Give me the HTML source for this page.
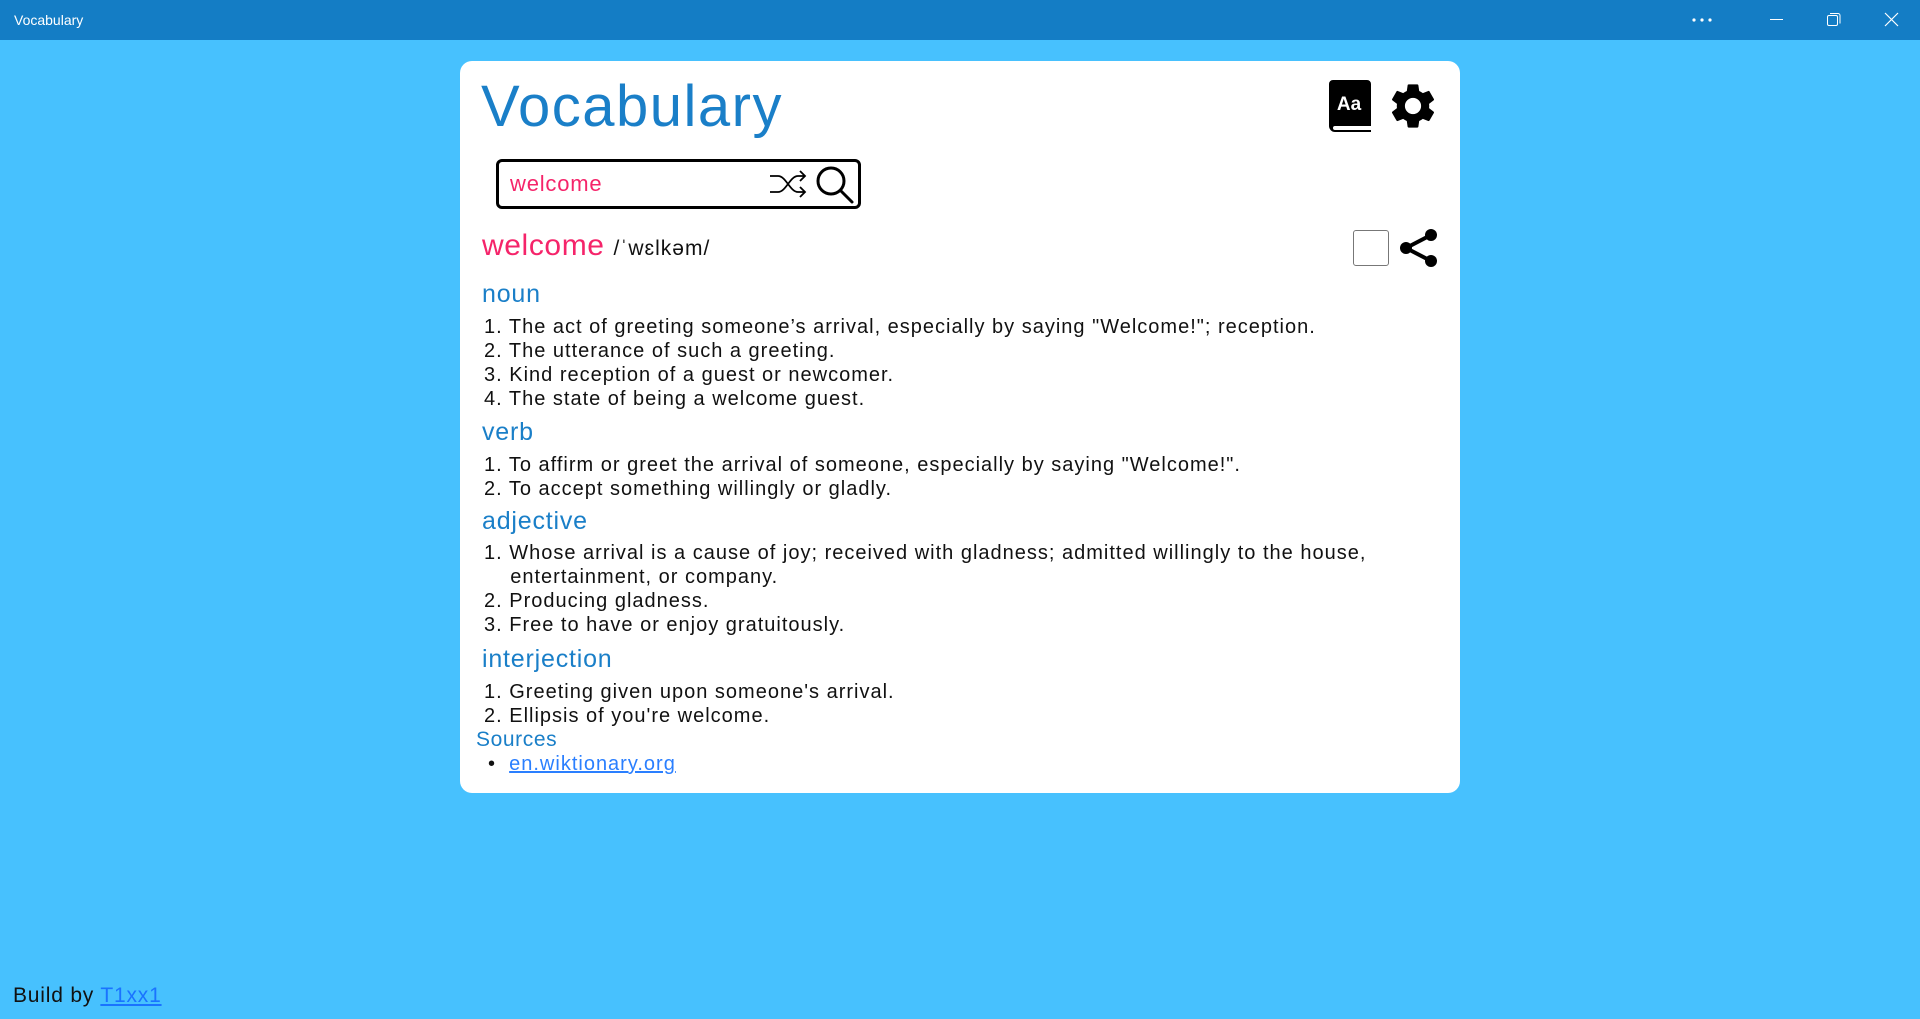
<!DOCTYPE html>
<html><head><meta charset="utf-8"><style>
*{margin:0;padding:0;box-sizing:border-box}
body{width:1920px;height:1019px;background:#47c1fe;font-family:"Liberation Sans",sans-serif;position:relative;overflow:hidden;color:#111}
.tb{position:absolute;left:0;top:0;width:1920px;height:40px;background:#147dc5;color:#fff;font-size:14px}
.a{position:absolute;white-space:nowrap}
.card{position:absolute;left:460px;top:61px;width:1000px;height:732px;background:#fff;border-radius:12px}
.h{color:#1a7fc8;font-size:25px;letter-spacing:0.8px}
.li{font-size:20px;line-height:24px;letter-spacing:1px}
</style></head><body>
<div class="tb">
<div class="a" style="left:14px;top:12px">Vocabulary</div>
<svg class="a" style="left:1690px;top:15px" width="24" height="10"><circle cx="4" cy="5" r="1.6" fill="#fff"/><circle cx="12" cy="5" r="1.6" fill="#fff"/><circle cx="20" cy="5" r="1.6" fill="#fff"/></svg>
<div class="a" style="left:1770px;top:19px;width:13px;height:1px;background:#fff"></div>
<svg class="a" style="left:1826px;top:12px" width="16" height="16" fill="none" stroke="#fff"><rect x="1.5" y="3.5" width="10" height="10" rx="1.5"/><path d="M4 1.5h8a2 2 0 0 1 2 2v8"/></svg>
<svg class="a" style="left:1884px;top:12px" width="15" height="15" stroke="#fff" stroke-width="1.2"><path d="M1 1L14 14M14 1L1 14"/></svg>
</div>
<div class="card"></div>
<div class="a" style="left:481px;top:73px;font-size:58px;color:#1a7fc8;letter-spacing:1.5px">Vocabulary</div>
<svg class="a" style="left:1329px;top:80px" width="42" height="52"><path d="M4 0h34a4 4 0 0 1 4 4v42H6a2 2 0 0 0 0 4h36v2H6a6 6 0 0 1-6-6V4a4 4 0 0 1 4-4z" fill="#000"/><text x="20" y="30" fill="#fff" font-size="19" font-weight="bold" text-anchor="middle" font-family="Liberation Sans">Aa</text></svg>
<svg class="a" style="left:1386px;top:79px" width="54" height="54" viewBox="0 0 24 24"><path fill="#000" d="M19.14 12.94c.04-.3.06-.61.06-.94 0-.32-.02-.64-.07-.94l2.03-1.58a.49.49 0 0 0 .12-.61l-1.920-3.32a.488.488 0 0 0-.59-.22l-2.39.96c-.5-.38-1.03-.7-1.62-.94l-.36-2.54a.484.484 0 0 0-.48-.41h-3.84c-.24 0-.43.17-.47.41l-.36 2.54c-.59.24-1.13.57-1.62.94l-2.39-.96c-.22-.08-.47 0-.59.22L2.74 8.87c-.12.21-.08.47.12.61l2.03 1.58c-.05.3-.09.63-.09.94s.02.64.07.94l-2.03 1.58a.49.49 0 0 0-.12.61l1.92 3.32c.12.22.37.29.59.22l2.39-.96c.5.38 1.03.7 1.62.94l.36 2.54c.05.24.24.41.48.41h3.84c.24 0 .44-.17.47-.41l.36-2.54c.59-.24 1.130-.56 1.62-.94l2.39.96c.22.08.47 0 .59-.22l1.92-3.32c.12-.22.07-.47-.12-.61l-2.01-1.58zM12 15.6A3.6 3.6 0 1 1 12 8.4a3.6 3.6 0 0 1 0 7.2z"/></svg>
<div class="a" style="left:496px;top:159px;width:365px;height:50px;border:3px solid #000;border-radius:6px"></div>
<div class="a" style="left:510px;top:171px;font-size:22px;color:#f5246a;letter-spacing:0.8px">welcome</div>
<svg class="a" style="left:768px;top:167px" width="40" height="34" fill="none" stroke="#000" stroke-width="1.8"><path d="M2 9h8c8 0 12 16 20 16h7M2 25h8c8 0 12-16 20-16h7M32 4l5 5-5 5M32 20l5 5-5 5"/></svg>
<svg class="a" style="left:815px;top:165px" width="40" height="40" fill="none" stroke="#000" stroke-width="3"><circle cx="16" cy="16" r="13"/><path d="M25.5 25.5L37 37" stroke-linecap="round"/></svg>
<div class="a" style="left:482px;top:229px;font-size:30px;color:#f5246a;letter-spacing:0.6px">welcome <span style="font-size:21px;color:#111;letter-spacing:1px">/ˈwɛlkəm/</span></div>
<div class="a" style="left:1353px;top:230px;width:36px;height:36px;border:1.5px solid #777;border-radius:3px"></div>
<svg class="a" style="left:1398px;top:227px" width="42" height="42"><path d="M8 21L33 8M8 21L33 34" stroke="#000" stroke-width="4"/><circle cx="8" cy="21" r="6"/><circle cx="33" cy="8" r="6"/><circle cx="33" cy="34" r="6"/></svg>
<div class="a h" style="left:482px;top:280px">noun</div>
<div class="a li" style="left:484px;top:315px">1. The act of greeting someone’s arrival, especially by saying "Welcome!"; reception.<br>2. The utterance of such a greeting.<br>3. Kind reception of a guest or newcomer.<br>4. The state of being a welcome guest.</div>
<div class="a h" style="left:482px;top:418px">verb</div>
<div class="a li" style="left:484px;top:453px">1. To affirm or greet the arrival of someone, especially by saying "Welcome!".<br>2. To accept something willingly or gladly.</div>
<div class="a h" style="left:482px;top:507px">adjective</div>
<div class="a li" style="left:484px;top:541px">1. Whose arrival is a cause of joy; received with gladness; admitted willingly to the house,<br>&nbsp;&nbsp;&nbsp;&nbsp;entertainment, or company.<br>2. Producing gladness.<br>3. Free to have or enjoy gratuitously.</div>
<div class="a h" style="left:482px;top:645px">interjection</div>
<div class="a li" style="left:484px;top:680px">1. Greeting given upon someone's arrival.<br>2. Ellipsis of you're welcome.</div>
<div class="a" style="left:476px;top:728px;font-size:21px;color:#1a7fc8;letter-spacing:0.6px">Sources</div>
<div class="a li" style="left:488px;top:752px">•&nbsp;&nbsp;<span style="color:#2a7fff;text-decoration:underline">en.wiktionary.org</span></div>
<div class="a" style="left:13px;top:984px;font-size:21px;color:#111;letter-spacing:0.8px">Build by <span style="color:#1a73ff;text-decoration:underline">T1xx1</span></div>
</body></html>
